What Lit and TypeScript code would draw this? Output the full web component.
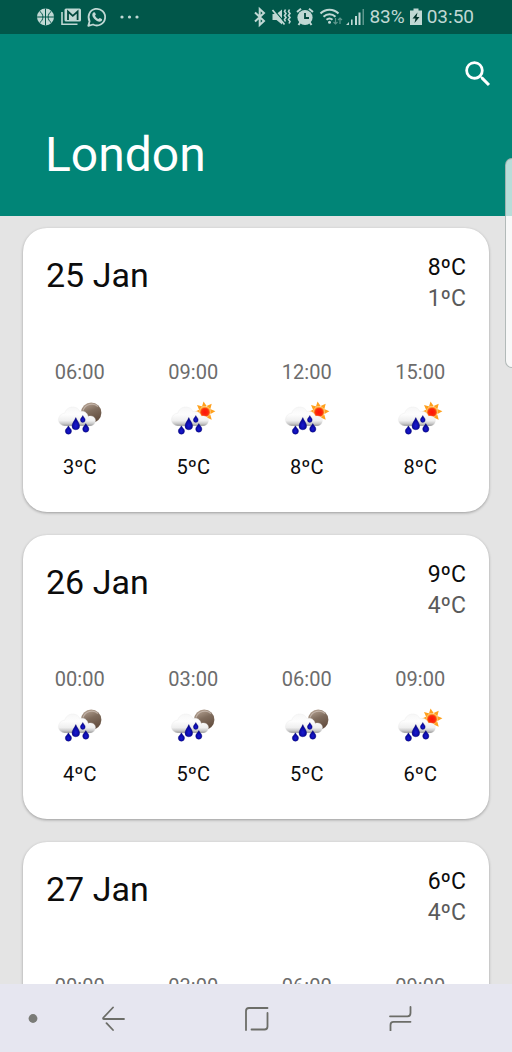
import { LitElement, html, css, svg, nothing } from "lit";
import { customElement, property } from "lit/decorators.js";

type Sky = "night-rain" | "day-rain";

interface Hour {
  time: string;
  sky: Sky;
  temp: number;
}

interface Day {
  date: string;
  high: number;
  low: number;
  hours: Hour[];
}

const FORECAST: Day[] = [
  {
    date: "25 Jan",
    high: 8,
    low: 1,
    hours: [
      { time: "06:00", sky: "night-rain", temp: 3 },
      { time: "09:00", sky: "day-rain", temp: 5 },
      { time: "12:00", sky: "day-rain", temp: 8 },
      { time: "15:00", sky: "day-rain", temp: 8 },
    ],
  },
  {
    date: "26 Jan",
    high: 9,
    low: 4,
    hours: [
      { time: "00:00", sky: "night-rain", temp: 4 },
      { time: "03:00", sky: "night-rain", temp: 5 },
      { time: "06:00", sky: "night-rain", temp: 5 },
      { time: "09:00", sky: "day-rain", temp: 6 },
    ],
  },
  {
    date: "27 Jan",
    high: 6,
    low: 4,
    hours: [
      { time: "00:00", sky: "night-rain", temp: 4 },
      { time: "03:00", sky: "night-rain", temp: 4 },
      { time: "06:00", sky: "night-rain", temp: 5 },
      { time: "09:00", sky: "day-rain", temp: 6 },
    ],
  },
];

@customElement("weather-icon")
export class WeatherIcon extends LitElement {
  @property() sky: Sky = "day-rain";

  static styles = css`
    :host {
      display: block;
      width: 46px;
      height: 37px;
    }
    .art {
      display: block;
      width: 100%;
      height: 100%;
      overflow: visible;
    }
  `;

  private drop(cx: number, top: number, w: number, h: number) {
    const r = w / 2;
    const y = top + h - r;
    return svg`<path fill="url(#drop)" stroke="#00006e" stroke-width="0.4"
      d="M${cx} ${top} C${cx + r * 0.3} ${top + h * 0.25} ${cx + r} ${y - r * 0.7} ${cx + r} ${y}
         A${r} ${r} 0 0 1 ${cx - r} ${y}
         C${cx - r} ${y - r * 0.7} ${cx - r * 0.3} ${top + h * 0.25} ${cx} ${top}Z"/>`;
  }

  private sun() {
    const rays = [-140, -98, -50, -3, 50, 180].map(
      (a) => svg`<path fill="#ffa01c" transform="rotate(${a} 36 10.8)" d="M41.4 8.4 L46.4 10.8 L41.4 13.2Z"/>`,
    );
    return svg`${rays}<circle cx="36" cy="10.8" r="5.600" fill="#ffb04a"/>
      <circle cx="36" cy="11.2" r="4.800" fill="url(#sun)"/>`;
  }

  render() {
    const night = this.sky === "night-rain";
    return html`<svg
      class="art"
      viewBox="1 0 46 37"
      role="img"
      aria-label=${night ? "Rain at night" : "Rain with sun"}
    >
      <defs>
        <linearGradient id="cloud" gradientUnits="userSpaceOnUse" x1="0" y1="5" x2="0" y2="26">
          <stop offset="0" stop-color="#f6f6f6" />
          <stop offset="0.4" stop-color="#fdfdfd" />
          <stop offset="0.7" stop-color="#efefef" />
          <stop offset="0.86" stop-color="#c4c4c4" />
          <stop offset="1" stop-color="#6c6c6c" />
        </linearGradient>
        <linearGradient id="moon" x1="0.2" y1="0" x2="0.6" y2="1">
          <stop offset="0" stop-color="#b8a595" />
          <stop offset="0.45" stop-color="#806d5e" />
          <stop offset="1" stop-color="#604a3b" />
        </linearGradient>
        <radialGradient id="sun">
          <stop offset="0" stop-color="#ff1208" />
          <stop offset="0.7" stop-color="#fb2a0b" />
          <stop offset="1" stop-color="#ff6a12" />
        </radialGradient>
        <radialGradient id="drop" cx="0.5" cy="0.65" r="0.6">
          <stop offset="0" stop-color="#1a1ad0" />
          <stop offset="1" stop-color="#00008a" />
        </radialGradient>
      </defs>
      ${night
        ? svg`<circle cx="35.2" cy="11.8" r="10.2" fill="url(#moon)"/>
            <path d="M27 9.500A9.300 9.300 0 0 1 42 5.500" fill="none" stroke="#d8cdc4" stroke-width="1.200" opacity="0.6"/>`
        : this.sun()}
      <path
        fill="url(#cloud)"
        stroke="#ececec"
        stroke-width="0.4"
        d="M8.8 24.9 C4.8 24.4 2.200 21.600 2.400 18.400 C2.700 14.800 5.400 12.300 9 12.100 C9.600 8.400 12.800 6 16.600 6 C20.300 6 22.800 7.700 23.900 10.600 C27.600 9.200 31.400 11.500 32.200 15.500 C35 14.400 39 15.400 39.400 19 C39.700 22.400 37.400 25 34 25 Z"
      />
      ${this.drop(26.8, 14.6, 4.8, 6.8)} ${this.drop(19.8, 16.6, 7.6, 12.2)}
      ${this.drop(12.4, 24.8, 6.2, 8.4)} ${this.drop(29.8, 22.6, 6.2, 8.6)}
    </svg>`;
  }
}

@customElement("forecast-card")
export class ForecastCard extends LitElement {
  @property({ attribute: false }) day?: Day;

  static styles = css`
    :host {
      display: block;
      flex: none;
      box-sizing: border-box;
      padding: 24px 0 33px;
      border-radius: 24px;
      background: #fff;
      box-shadow: 0 1px 3px rgba(0, 0, 0, 0.32);
    }
    .summary {
      display: flex;
      justify-content: space-between;
      padding: 0 23px;
    }
    .date {
      margin: 0;
      font-size: 34px;
      font-weight: 400;
      line-height: 46px;
      color: #0c0c0c;
    }
    .range {
      font-size: 23px;
      line-height: 31px;
      text-align: right;
      color: #0c0c0c;
    }
    .low {
      color: #5a5a5a;
    }
    .hours {
      display: grid;
      grid-template-columns: repeat(4, 1fr);
      margin: 46px 0 0;
      padding: 0 12px 0 0;
      list-style: none;
    }
    .hour {
      display: flex;
      flex-direction: column;
      align-items: center;
      gap: 17px;
      font-size: 20px;
      line-height: 24px;
      color: #0c0c0c;
    }
    .time {
      color: #6c6c6c;
    }
  `;

  render() {
    const day = this.day;
    if (!day) return nothing;
    return html`
      <div class="summary">
        <h2 class="date">${day.date}</h2>
        <div class="range">
          <div>${day.high}ºC</div>
          <div class="low">${day.low}ºC</div>
        </div>
      </div>
      <ul class="hours">
        ${day.hours.map(
          (h) => html`<li class="hour">
            <time class="time">${h.time}</time>
            <weather-icon .sky=${h.sky}></weather-icon>
            <span>${h.temp}ºC</span>
          </li>`,
        )}
      </ul>
    `;
  }
}

@customElement("status-bar")
export class StatusBar extends LitElement {
  static styles = css`
    :host {
      display: flex;
      justify-content: space-between;
      align-items: center;
      flex: none;
      height: 34px;
      padding: 0 38px 0 36px;
      background: #01574a;
      color: #c0d8d4;
      font-size: 19px;
      line-height: 22px;
    }
    .group {
      display: flex;
      align-items: center;
      gap: 6px;
    }
    .system {
      gap: 5px;
    }
    .glyph {
      display: block;
      flex: none;
      overflow: visible;
    }
    .more {
      margin-left: 6px;
    }
  `;

  render() {
    return html`
      <div class="group">
        <svg class="glyph" width="19" height="20" viewBox="0 0 19 20">
          <circle cx="9.5" cy="10" r="8.5" fill="#c0d8d4" />
          <path d="M9.5 1.5v17M1 10h17M3.5 4C8 7.500 8 12.500 3.500 16M15.500 4C11 7.500 11 12.500 15.500 16" fill="none" stroke="#01574a" />
        </svg>
        <svg class="glyph" width="20" height="20" viewBox="0 0 20 20">
          <path d="M1 5v12.200h15.500" fill="none" stroke="#c0d8d4" stroke-width="1.600" />
          <rect x="3.500" y="1.500" width="16.500" height="13" rx="1.500" fill="#c0d8d4" />
          <path d="M7 13V4.500l4.800 4.300 4.800-4.300V13" fill="none" stroke="#01473d" stroke-width="1.800" />
        </svg>
        <svg class="glyph" width="20" height="20" viewBox="0 0 20 20">
          <path d="M1.300 18.800l1.300-4.600A8.300 8.300 0 1 1 6 17.500z" fill="none" stroke="#c0d8d4" stroke-width="1.800" stroke-linejoin="round" />
          <path d="M6.900 5.300c.6-.3 1-.1 1.200.4l.7 1.600c.2.500-.8 1.300-.8 1.500.8 1.600 1.900 2.600 3.400 3.200.3.100 1.100-1.200 1.500-1l1.900.9c.6.300.2 1.900-.6 2.400-1.800 1.100-4.700-.1-6.800-2.300-2.300-2.500-3-5.200-.5-6.700z" fill="#c0d8d4" />
        </svg>
        <svg class="glyph more" width="20" height="20" viewBox="0 0 20 20" fill="#c0d8d4">
          <circle cx="3" cy="10" r="1.600" />
          <circle cx="10.500" cy="10" r="1.600" />
          <circle cx="18" cy="10" r="1.600" />
        </svg>
      </div>
      <div class="group system">
        <svg class="glyph" width="14" height="20" viewBox="0 0 14 20" fill="none" stroke="#c0d8d4" stroke-width="2">
          <path d="M3 5.500l9 8.500-4.300 4V2L12 6l-9 8.500" />
        </svg>
        <svg class="glyph" width="20" height="20" viewBox="0 0 20 20">
          <path d="M1.500 7h4L11 2.500v15L5.500 13h-4z" fill="#c0d8d4" />
          <path d="M2.500 2.500l12 14" stroke="#01574a" stroke-width="1.200" />
          <path d="M1.500 3l12 14.500" stroke="#c0d8d4" stroke-width="1.800" />
          <path d="M14.500 2.500l-1 2 1.500 2-1.500 2 1.500 2-1.500 2 1 2M18.500 2.500l-1 2 1.500 2-1.500 2 1.500 2-1.500 2 1.500 2-1 2" fill="none" stroke="#c0d8d4" stroke-width="1.600" />
        </svg>
        <svg class="glyph" width="18" height="20" viewBox="0 0 18 20">
          <circle cx="9" cy="10.500" r="7.600" fill="#c0d8d4" />
          <path d="M1 5l4-3.300M17 5l-4-3.300M4.500 15l-2 3M13.500 15l2 3" stroke="#c0d8d4" stroke-width="2" />
          <path d="M9 6V11h4" fill="none" stroke="#01473d" stroke-width="1.800" />
        </svg>
        <svg class="glyph" width="22" height="20" viewBox="0 0 22 20" fill="none" stroke="#c0d8d4" stroke-width="2">
          <path d="M1.500 6.500a12.500 12.500 0 0 1 18 0M4.500 9.800a8.500 8.500 0 0 1 12 0M7.500 12.800a4.500 4.500 0 0 1 6 0" />
          <circle cx="10.500" cy="15.300" r="1.500" fill="#c0d8d4" stroke="none" />
          <path d="M16.500 11v6M14.500 15l2 2 2-2M21 17v-6M19 13l2-2 2 2" stroke="#5d968c" stroke-width="1.200" />
        </svg>
        <svg class="glyph" width="18" height="20" viewBox="0 0 18 20" fill="#c0d8d4">
          <path d="M0 18l3-3v3zM5 12.500h1.600V18H5zM9 9h2v9H9zM12.500 5.500h2V18h-2z" />
          <path d="M16.500 2h1.500v16h-1.500z" fill="#5d968c" />
        </svg>
        <span>83%</span>
        <svg class="glyph" width="12" height="20" viewBox="0 0 12 20">
          <path d="M3.500 1.500h5v2H12V18H0V3.500h3.500z" fill="#c0d8d4" />
          <path d="M7.500 5.500L2.500 11.500h3l-1 4.500 5-6h-3z" fill="#01322b" />
        </svg>
        <span>03:50</span>
      </div>
    `;
  }
}

@customElement("nav-bar")
export class NavBar extends LitElement {
  static styles = css`
    :host {
      display: grid;
      grid-template-columns: 18px repeat(3, 1fr);
      flex: none;
      height: 68px;
      padding: 0 41px 0 24px;
      background: #e6e6f0;
    }
    .key {
      display: flex;
      align-items: center;
      justify-content: center;
      margin: 0;
      padding: 0;
      border: 0;
      background: none;
    }
    .glyph {
      display: block;
      flex: none;
      fill: none;
      stroke: #6c6d68;
      stroke-width: 1.8;
      stroke-linecap: round;
      stroke-linejoin: round;
    }
    .dot {
      fill: #7a7b77;
      stroke: none;
    }
  `;

  render() {
    return html`
      <button class="key" aria-label="Hide navigation bar">
        <svg class="glyph" width="10" height="10" viewBox="0 0 10 10"><circle class="dot" cx="5" cy="5.500" r="4.400" /></svg>
      </button>
      <button class="key" aria-label="Back">
        <svg class="glyph" width="26" height="26" viewBox="0 0 26 26">
          <path d="M12 2.500L2.500 12.500Q1.500 14 3 14H23M5.500 18.200L12 25" />
        </svg>
      </button>
      <button class="key" aria-label="Home">
        <svg class="glyph" width="26" height="26" viewBox="0 0 26 26">
          <path d="M2 25V6Q2 3 5 3H23.500M23.500 8V21.500Q23.500 24.500 20.500 24.500H7.500" />
        </svg>
      </button>
      <button class="key" aria-label="Recent apps">
        <svg class="glyph" width="26" height="26" viewBox="0 0 26 26">
          <path d="M23.500 2V8Q23.500 11.300 20.500 11.300H3M3.500 25.500V20Q3.500 16.800 6.500 16.800H23.500" />
        </svg>
      </button>
    `;
  }
}

@customElement("app-root")
export class AppRoot extends LitElement {
  static styles = css`
    :host {
      display: flex;
      flex-direction: column;
      position: relative;
      height: 100vh;
      overflow: hidden;
      background: #e4e4e4;
      font-family: Roboto, "Noto Sans", sans-serif;
    }
    .header {
      display: flex;
      flex-direction: column;
      flex: none;
      gap: 35px;
      padding: 22px 16px 33px 45px;
      background: #018577;
      color: #fff;
    }
    .search {
      display: flex;
      align-items: center;
      justify-content: center;
      align-self: flex-end;
      width: 36px;
      height: 36px;
      padding: 0;
      border: 0;
      background: none;
      color: inherit;
    }
    .lens {
      display: block;
      flex: none;
    }
    .city {
      margin: 0;
      font-size: 48px;
      font-weight: 400;
      line-height: 56px;
    }
    .days {
      display: flex;
      flex-direction: column;
      flex: 1;
      gap: 23px;
      min-height: 0;
      padding: 12px 23px 0;
      overflow-y: auto;
      scrollbar-width: none;
    }
    /* Edge panel handle that floats over the header and the list. */
    .handle {
      position: absolute;
      top: 158px;
      right: 0;
      width: 7px;
      height: 210px;
      box-sizing: border-box;
      border: 1px solid rgba(150, 160, 158, 0.7);
      border-right: 0;
      border-radius: 7px 0 0 7px;
      background: rgba(255, 255, 255, 0.72);
    }
  `;

  render() {
    return html`
      <status-bar></status-bar>
      <header class="header">
        <button class="search" aria-label="Search">
          <svg class="lens" width="34" height="34" viewBox="0 0 24 24" fill="currentColor">
            <path
              d="M15.500 14h-.79l-.28-.27A6.471 6.471 0 0 0 16 9.500 6.500 6.500 0 1 0 9.500 16c1.610 0 3.090-.59 4.230-1.570l.27.28v.79l5 4.990L20.490 19l-4.990-5zm-6 0C7.010 14 5 11.990 5 9.500S7.010 5 9.500 5 14 7.010 14 9.500 11.990 14 9.500 14z"
            />
          </svg>
        </button>
        <h1 class="city">London</h1>
      </header>
      <main class="days">
        ${FORECAST.map((day) => html`<forecast-card .day=${day}></forecast-card>`)}
      </main>
      <nav-bar></nav-bar>
      <div class="handle"></div>
    `;
  }
}
